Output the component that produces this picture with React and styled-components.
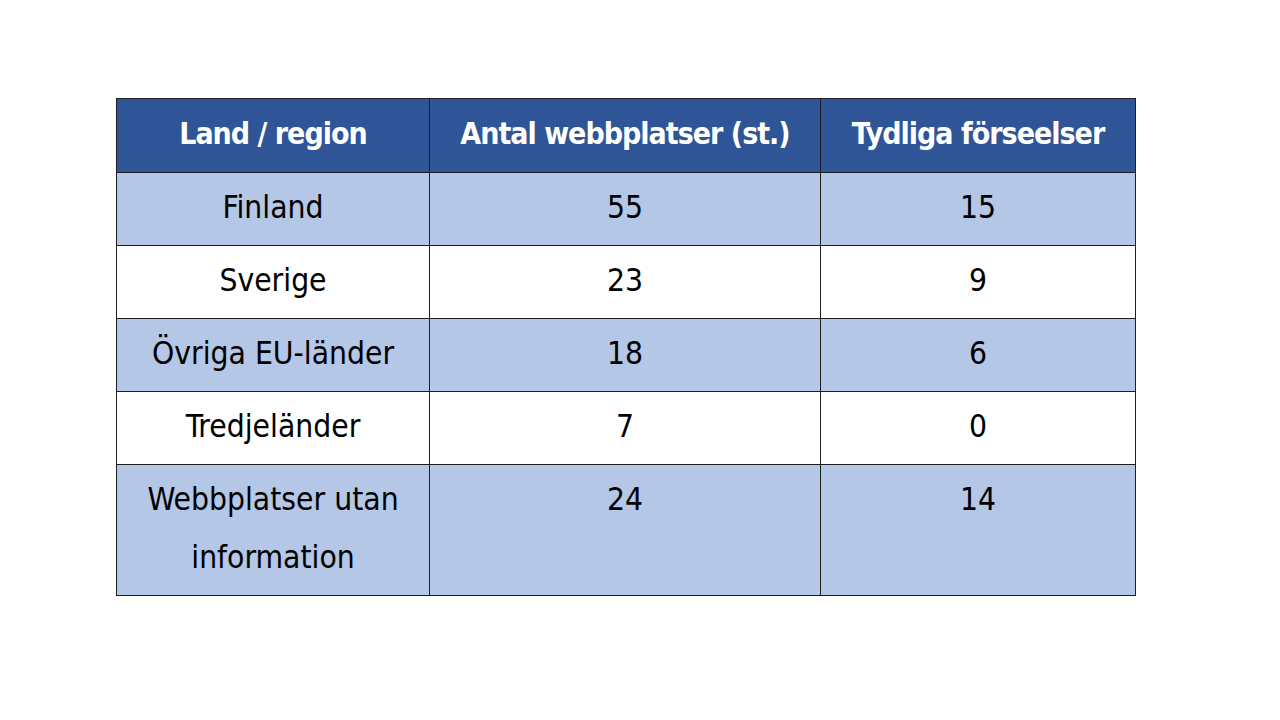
import React from "react";
import styled, { createGlobalStyle } from "styled-components";

const Global = createGlobalStyle`
  html, body { margin: 0; padding: 0; background: #ffffff; }
  body { width: 1280px; height: 720px; overflow: hidden; }
`;

const Page = styled.div`
  width: 1280px;
  height: 720px;
  box-sizing: border-box;
  padding: 98px 0 0 116px;
  background: #ffffff;
`;

const Table = styled.table`
  border-collapse: collapse;
  table-layout: fixed;
  width: 1019px;
  font-family: "DejaVu Sans Condensed", "Liberation Sans Narrow", "DejaVu Sans", sans-serif;
  font-size: 31.5px;
  line-height: 58px;
`;

const HeadCell = styled.th`
  background: #2f5597;
  color: #ffffff;
  font-weight: 700;
  font-size: 30px;
  letter-spacing: -1px;
  height: 73px;
  box-sizing: border-box;
  padding: 6px 0 9px;
  border: 1.5px solid #1e1e1e;
  text-align: center;
  vertical-align: top;
`;

const Cell = styled.td`
  background: ${(p) => (p.$shaded ? "#b4c7e7" : "#ffffff")};
  color: #000000;
  font-weight: 400;
  box-sizing: border-box;
  height: ${(p) => (p.$tall ? "130px" : "72px")};
  padding: 5px 0 9px;
  border: 1.5px solid #1e1e1e;
  text-align: center;
  vertical-align: top;
`;

const rows = [
  ["Finland", "55", "15"],
  ["Sverige", "23", "9"],
  ["Övriga EU-länder", "18", "6"],
  ["Tredjeländer", "7", "0"],
  ["Webbplatser utan information", "24", "14"],
];

export default function App() {
  return (
    <>
      <Global />
      <Page>
        <Table>
          <colgroup>
            <col style={{ width: "313px" }} />
            <col style={{ width: "391px" }} />
            <col style={{ width: "315px" }} />
          </colgroup>
          <thead>
            <tr>
              <HeadCell>Land / region</HeadCell>
              <HeadCell>Antal webbplatser (st.)</HeadCell>
              <HeadCell>Tydliga förseelser</HeadCell>
            </tr>
          </thead>
          <tbody>
            {rows.map((r, i) => (
              <tr key={r[0]}>
                {r.map((c, j) => (
                  <Cell key={j} $shaded={i % 2 === 0} $tall={i === rows.length - 1}>
                    {i === rows.length - 1 && j === 0 ? (
                      <>
                        Webbplatser utan
                        <br />
                        information
                      </>
                    ) : (
                      c
                    )}
                  </Cell>
                ))}
              </tr>
            ))}
          </tbody>
        </Table>
      </Page>
    </>
  );
}
